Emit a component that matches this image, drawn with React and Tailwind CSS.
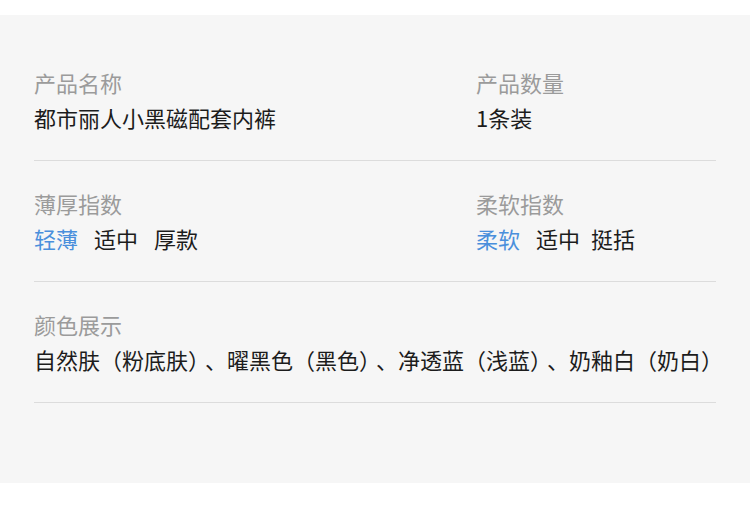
import React from "react";

const font = {
  fontFamily: '"Noto Sans CJK SC", "Noto Sans", sans-serif',
};

const colors = ["自然肤（粉底肤）", "曜黑色（黑色）", "净透蓝（浅蓝）", "奶釉白（奶白）"];

const Field = ({ label, children, className = "" }) => (
  <div className={className}>
    <p className="text-[22px] leading-[35px] text-[#9b9b9b]">{label}</p>
    <div className="text-[22px] leading-[35px] text-[#1c1c1c] whitespace-nowrap">
      {children}
    </div>
  </div>
);

const App = () => {
  return (
    <div className="w-[750px] h-[506px] bg-white" style={font}>
      <div className="mt-[15px] bg-[#f6f6f6] px-[34px] pt-[25px] pb-[80px]">
        {/* 名称 / 数量 */}
        <div className="flex pt-[25px] pb-[25px] border-b border-[#dcdcdc]">
          <Field label="产品名称" className="w-[442px]">
            都市丽人小黑磁配套内裤
          </Field>
          <Field label="产品数量">1条装</Field>
        </div>

        {/* 薄厚 / 柔软 */}
        <div className="flex pt-[25px] pb-[25px] border-b border-[#dcdcdc]">
          <Field label="薄厚指数" className="w-[442px]">
            <span className="text-[#4a8fdc] mr-4">轻薄</span>
            <span className="mr-4">适中</span>
            <span>厚款</span>
          </Field>
          <Field label="柔软指数">
            <span className="text-[#4a8fdc] mr-4">柔软</span>
            <span className="mr-[11px]">适中</span>
            <span>挺括</span>
          </Field>
        </div>

        {/* 颜色 */}
        <div className="pt-[25px] pb-[25px] border-b border-[#dcdcdc]">
          <Field label="颜色展示">
            {colors.map((c, i) => (
              <React.Fragment key={c}>
                {i > 0 && <span className="ml-[6px]">、</span>}
                {c}
              </React.Fragment>
            ))}
          </Field>
        </div>
      </div>
    </div>
  );
};

export default App;
